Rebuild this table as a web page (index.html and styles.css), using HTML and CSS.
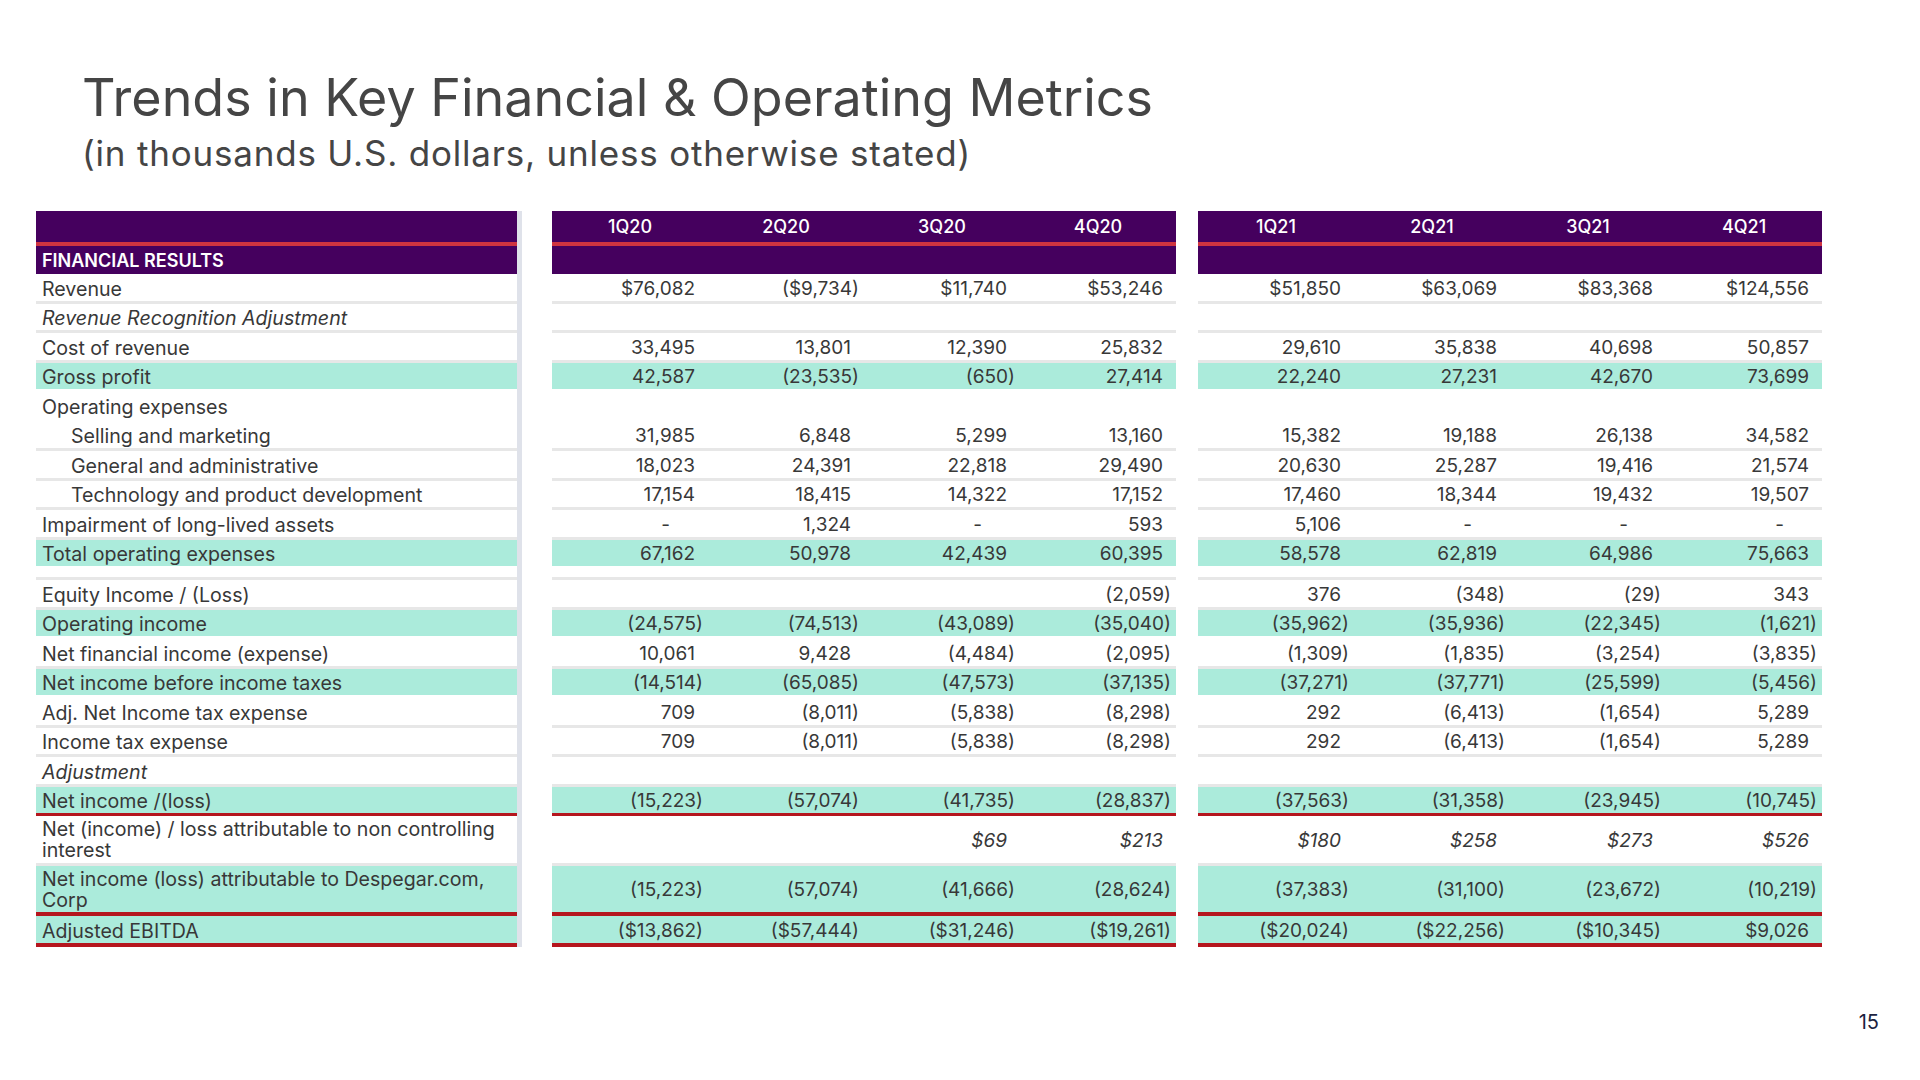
FILE: index.html
```html
<!DOCTYPE html>
<html lang="en">
<head>
    <meta charset="UTF-8">
    <meta name="viewport" content="width=device-width, initial-scale=1.0">
    <title>Trends in Key Financial &amp; Operating Metrics</title>
    <link rel="stylesheet" href="styles.css">
</head>

<body>
    <div class="slide">
        <header class="heading">
            <h1 class="title">Trends in Key Financial &amp; Operating Metrics</h1>
            <p class="subtitle">(in thousands U.S. dollars, unless otherwise stated)</p>
        </header>

        <table class="metrics">
            <colgroup>
                <col class="c-lbl">
                <col class="c-bar">
                <col class="c-gap1">
                <col class="c-q"><col class="c-q"><col class="c-q"><col class="c-q">
                <col class="c-gap2">
                <col class="c-q"><col class="c-q"><col class="c-q"><col class="c-q">
            </colgroup>
            <thead>
                <tr class="qh">
                    <th class="lbl"></th><td class="bar"></td><td class="gap"></td>
                    <th>1Q20</th><th>2Q20</th><th>3Q20</th><th>4Q20</th>
                    <td class="gap"></td>
                    <th>1Q21</th><th>2Q21</th><th>3Q21</th><th>4Q21</th>
                </tr>
                <tr class="sec">
                    <th class="lbl">FINANCIAL RESULTS</th><td class="bar"></td><td class="gap"></td>
                    <th></th><th></th><th></th><th></th>
                    <td class="gap"></td>
                    <th></th><th></th><th></th><th></th>
                </tr>
            </thead>
            <tbody>
                <tr>
                    <td class="lbl">Revenue</td><td class="bar"></td><td class="gap"></td>
                    <td>$76,082</td><td class="n">($9,734)</td><td>$11,740</td><td>$53,246</td>
                    <td class="gap"></td>
                    <td>$51,850</td><td>$63,069</td><td>$83,368</td><td>$124,556</td>
                </tr>
                <tr class="it">
                    <td class="lbl">Revenue Recognition Adjustment</td><td class="bar"></td><td class="gap"></td>
                    <td></td><td></td><td></td><td></td>
                    <td class="gap"></td>
                    <td></td><td></td><td></td><td></td>
                </tr>
                <tr>
                    <td class="lbl">Cost of revenue</td><td class="bar"></td><td class="gap"></td>
                    <td>33,495</td><td>13,801</td><td>12,390</td><td>25,832</td>
                    <td class="gap"></td>
                    <td>29,610</td><td>35,838</td><td>40,698</td><td>50,857</td>
                </tr>
                <tr class="hl">
                    <td class="lbl">Gross profit</td><td class="bar"></td><td class="gap"></td>
                    <td>42,587</td><td class="n">(23,535)</td><td class="n">(650)</td><td>27,414</td>
                    <td class="gap"></td>
                    <td>22,240</td><td>27,231</td><td>42,670</td><td>73,699</td>
                </tr>
                <tr class="open">
                    <td class="lbl">Operating expenses</td><td class="bar"></td><td class="gap"></td>
                    <td></td><td></td><td></td><td></td>
                    <td class="gap"></td>
                    <td></td><td></td><td></td><td></td>
                </tr>
                <tr>
                    <td class="lbl ind">Selling and marketing</td><td class="bar"></td><td class="gap"></td>
                    <td>31,985</td><td>6,848</td><td>5,299</td><td>13,160</td>
                    <td class="gap"></td>
                    <td>15,382</td><td>19,188</td><td>26,138</td><td>34,582</td>
                </tr>
                <tr>
                    <td class="lbl ind">General and administrative</td><td class="bar"></td><td class="gap"></td>
                    <td>18,023</td><td>24,391</td><td>22,818</td><td>29,490</td>
                    <td class="gap"></td>
                    <td>20,630</td><td>25,287</td><td>19,416</td><td>21,574</td>
                </tr>
                <tr>
                    <td class="lbl ind">Technology and product development</td><td class="bar"></td><td class="gap"></td>
                    <td>17,154</td><td>18,415</td><td>14,322</td><td>17,152</td>
                    <td class="gap"></td>
                    <td>17,460</td><td>18,344</td><td>19,432</td><td>19,507</td>
                </tr>
                <tr>
                    <td class="lbl">Impairment of long-lived assets</td><td class="bar"></td><td class="gap"></td>
                    <td class="d">-</td><td>1,324</td><td class="d">-</td><td>593</td>
                    <td class="gap"></td>
                    <td>5,106</td><td class="d">-</td><td class="d">-</td><td class="d">-</td>
                </tr>
                <tr class="hl">
                    <td class="lbl">Total operating expenses</td><td class="bar"></td><td class="gap"></td>
                    <td>67,162</td><td>50,978</td><td>42,439</td><td>60,395</td>
                    <td class="gap"></td>
                    <td>58,578</td><td>62,819</td><td>64,986</td><td>75,663</td>
                </tr>
                <tr class="sp">
                    <td class="lbl"></td><td class="bar"></td><td class="gap"></td>
                    <td></td><td></td><td></td><td></td>
                    <td class="gap"></td>
                    <td></td><td></td><td></td><td></td>
                </tr>
                <tr>
                    <td class="lbl">Equity Income / (Loss)</td><td class="bar"></td><td class="gap"></td>
                    <td></td><td></td><td></td><td class="n">(2,059)</td>
                    <td class="gap"></td>
                    <td>376</td><td class="n">(348)</td><td class="n">(29)</td><td>343</td>
                </tr>
                <tr class="hl">
                    <td class="lbl">Operating income</td><td class="bar"></td><td class="gap"></td>
                    <td class="n">(24,575)</td><td class="n">(74,513)</td><td class="n">(43,089)</td><td class="n">(35,040)</td>
                    <td class="gap"></td>
                    <td class="n">(35,962)</td><td class="n">(35,936)</td><td class="n">(22,345)</td><td class="n">(1,621)</td>
                </tr>
                <tr>
                    <td class="lbl">Net financial income (expense)</td><td class="bar"></td><td class="gap"></td>
                    <td>10,061</td><td>9,428</td><td class="n">(4,484)</td><td class="n">(2,095)</td>
                    <td class="gap"></td>
                    <td class="n">(1,309)</td><td class="n">(1,835)</td><td class="n">(3,254)</td><td class="n">(3,835)</td>
                </tr>
                <tr class="hl">
                    <td class="lbl">Net income before income taxes</td><td class="bar"></td><td class="gap"></td>
                    <td class="n">(14,514)</td><td class="n">(65,085)</td><td class="n">(47,573)</td><td class="n">(37,135)</td>
                    <td class="gap"></td>
                    <td class="n">(37,271)</td><td class="n">(37,771)</td><td class="n">(25,599)</td><td class="n">(5,456)</td>
                </tr>
                <tr>
                    <td class="lbl">Adj. Net Income tax expense</td><td class="bar"></td><td class="gap"></td>
                    <td>709</td><td class="n">(8,011)</td><td class="n">(5,838)</td><td class="n">(8,298)</td>
                    <td class="gap"></td>
                    <td>292</td><td class="n">(6,413)</td><td class="n">(1,654)</td><td>5,289</td>
                </tr>
                <tr>
                    <td class="lbl">Income tax expense</td><td class="bar"></td><td class="gap"></td>
                    <td>709</td><td class="n">(8,011)</td><td class="n">(5,838)</td><td class="n">(8,298)</td>
                    <td class="gap"></td>
                    <td>292</td><td class="n">(6,413)</td><td class="n">(1,654)</td><td>5,289</td>
                </tr>
                <tr class="it">
                    <td class="lbl">Adjustment</td><td class="bar"></td><td class="gap"></td>
                    <td></td><td></td><td></td><td></td>
                    <td class="gap"></td>
                    <td></td><td></td><td></td><td></td>
                </tr>
                <tr class="hl red">
                    <td class="lbl">Net income /(loss)</td><td class="bar"></td><td class="gap"></td>
                    <td class="n">(15,223)</td><td class="n">(57,074)</td><td class="n">(41,735)</td><td class="n">(28,837)</td>
                    <td class="gap"></td>
                    <td class="n">(37,563)</td><td class="n">(31,358)</td><td class="n">(23,945)</td><td class="n">(10,745)</td>
                </tr>
                <tr class="two it-v">
                    <td class="lbl">Net (income) / loss attributable to non controlling<br>interest</td><td class="bar"></td><td class="gap"></td>
                    <td></td><td></td><td>$69</td><td>$213</td>
                    <td class="gap"></td>
                    <td>$180</td><td>$258</td><td>$273</td><td>$526</td>
                </tr>
                <tr class="two hl red thick">
                    <td class="lbl">Net income (loss) attributable to Despegar.com,<br>Corp</td><td class="bar"></td><td class="gap"></td>
                    <td class="n">(15,223)</td><td class="n">(57,074)</td><td class="n">(41,666)</td><td class="n">(28,624)</td>
                    <td class="gap"></td>
                    <td class="n">(37,383)</td><td class="n">(31,100)</td><td class="n">(23,672)</td><td class="n">(10,219)</td>
                </tr>
                <tr class="hl red thick">
                    <td class="lbl">Adjusted EBITDA</td><td class="bar"></td><td class="gap"></td>
                    <td class="n">($13,862)</td><td class="n">($57,444)</td><td class="n">($31,246)</td><td class="n">($19,261)</td>
                    <td class="gap"></td>
                    <td class="n">($20,024)</td><td class="n">($22,256)</td><td class="n">($10,345)</td><td>$9,026</td>
                </tr>
            </tbody>
        </table>

        <footer class="pagenum">15</footer>
    </div>
</body>
</html>
```

FILE: styles.css
```css
body {
    margin: 0;
    padding: 0;
    background-color: #fff;
    font-family: Inter, "Noto Sans", sans-serif;
    color: #383838;
}

.slide {
    width: 1920px;
    height: 1080px;
    box-sizing: border-box;
    padding: 68px 0 0 36px;
    overflow: hidden;
}

/* Заголовок слайда */
.heading {
    padding-left: 46px;
    color: #454545;
}

.title {
    margin: 0;
    font-size: 52px;
    line-height: 60px;
    font-weight: 400;
}

.subtitle {
    margin: 4px 0 0;
    font-size: 35px;
    line-height: 42px;
    letter-spacing: 0.8px;
}

/* Таблица показателей */
.metrics {
    margin-top: 37px;
    width: 1786px;
    table-layout: fixed;
    border-collapse: separate;
    border-spacing: 0;
    font-size: 19px;
}

.c-lbl { width: 481px; }
.c-bar { width: 5px; }
.c-gap1 { width: 30px; }
.c-gap2 { width: 22px; }
.c-q { width: 156px; }

.metrics td {
    height: 22px;
    padding: 3.5px 13px 1px 6px;
    line-height: 22px;
    text-align: right;
    vertical-align: middle;
    white-space: nowrap;
    border-bottom: 3px solid #e7e7e7;
}

.metrics td.lbl {
    text-align: left;
    white-space: normal;
    font-size: 19.6px;
}

.metrics td.ind {
    padding-left: 35px;
}

.metrics td.n {
    padding-right: 5px;
}

.metrics td.d {
    padding-right: 38px;
}

.metrics .bar,
.metrics td.bar {
    padding: 0;
    background-color: #dfe2ea;
    border-bottom: 0;
}

.metrics .gap,
.metrics td.gap {
    padding: 0;
    background: none;
    border-bottom: 0;
}

/* Шапка */
.metrics thead th {
    background-color: #45005e;
    color: #fff;
    font-weight: 500;
    font-size: 18px;
    line-height: 22px;
    text-align: center;
    padding: 0 6px;
}

.qh th {
    height: 31px;
    border-bottom: 4px solid #cf3440;
}

.sec th {
    height: 27px;
}

.sec th.lbl {
    text-align: left;
    font-weight: 600;
    padding-top: 1px;
}

/* Подсвеченные строки */
.hl td {
    background-color: #abebdb;
    border-bottom-color: #fff;
}

.red td {
    border-bottom-color: #b5161e;
}

.thick td {
    border-bottom-width: 4px;
}

.open td {
    border-bottom-color: #fff;
}

.it td.lbl,
.it-v td {
    font-style: italic;
}

.it-v td.lbl {
    font-style: normal;
}

.two td {
    line-height: 21px;
    padding-top: 3px;
    padding-bottom: 1.5px;
}

.sp td {
    height: 8px;
    padding: 0;
    line-height: 0;
}

.pagenum {
    margin-top: 63px;
    padding-right: 41px;
    text-align: right;
    font-size: 20px;
    line-height: 24px;
    color: #1c2340;
}
```
